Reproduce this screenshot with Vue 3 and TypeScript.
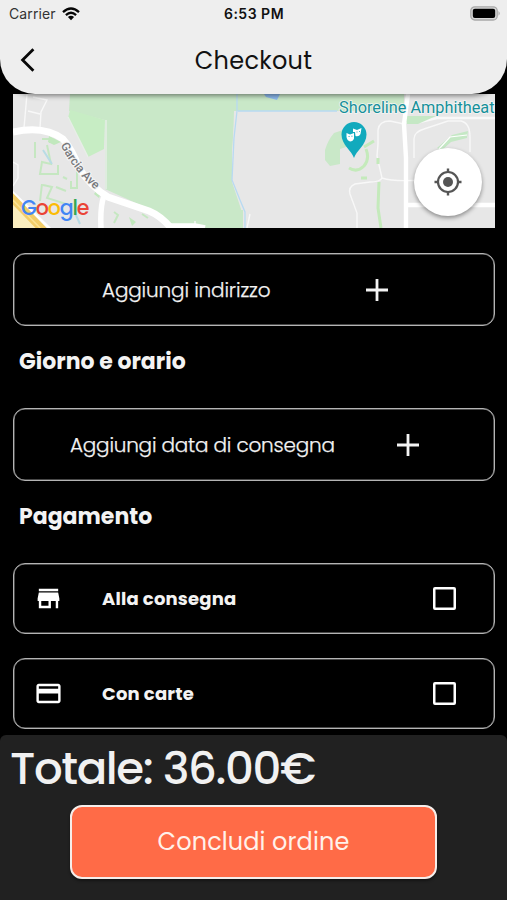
<script setup lang="ts">
import { ref } from 'vue'

interface AddRow {
  id: string
  label: string
}
interface Payment {
  id: string
  label: string
  icon: string
}

const address: AddRow = { id: 'address', label: 'Aggiungi indirizzo' }
const delivery: AddRow = { id: 'delivery', label: 'Aggiungi data di consegna' }

const payments: Payment[] = [
  {
    id: 'cash',
    label: 'Alla consegna',
    icon: 'M20 4H4v2h16V4zm1 10v-2l-1-5H4l-1 5v2h1v6h10v-6h4v6h2v-6h1zm-9 4H6v-4h6v4z',
  },
  {
    id: 'card',
    label: 'Con carte',
    icon: 'M20 4H4c-1.11 0-1.99.89-1.99 2L2 18c0 1.11.89 2 2 2h16c1.11 0 2-.89 2-2V6c0-1.11-.89-2-2-2zm0 14H4v-6h16v6zm0-10H4V6h16v2z',
  },
]
const selected = ref<string | null>(null)
const toggle = (id: string) => {
  selected.value = selected.value === id ? null : id
}
</script>

<template>
  <div class="screen">
    <header class="header">
      <div class="status">
        <div class="carrier">
          <span class="carrier-name">Carrier</span>
          <svg class="wifi" viewBox="0 0 18 14">
            <path d="M1 5.2Q9-2.2 17 5.2M3.9 8.1Q9 3.5 14.1 8.1" fill="none" stroke="#050505" stroke-width="2.3" />
            <path d="M5.9 10Q9 7.4 12.1 10L9 13.2z" fill="#050505" />
          </svg>
        </div>
        <span class="time">6:53 PM</span>
        <svg class="battery" viewBox="0 0 31 15">
          <rect x=".8" y=".8" width="26.4" height="13.2" rx="4" fill="#d8d8d8" stroke="#a9a9a9" stroke-width="1.3" />
          <rect x="2.8" y="2.8" width="22.4" height="9.2" rx="2" fill="#000" />
          <path d="M28.5 5Q31 7.4 28.5 9.8z" fill="#a9a9a9" />
        </svg>
      </div>
      <div class="nav">
        <svg class="back" viewBox="0 0 16 24">
          <path d="M13.4 1.2L2.6 12l10.8 10.8" fill="none" stroke="#080808" stroke-width="2.8" />
        </svg>
        <h1 class="title">Checkout</h1>
      </div>
    </header>

    <main class="content">
      <div class="map">
        <svg class="map-art" viewBox="13 94 482 134">
          <rect x="13" y="94" width="482" height="134" fill="#e7e7e7" />
          <path d="M70 94H404V110L400 112H235L232 150V182L242 212V228H172L158 213L105 189V120L69 111z" fill="#c9e8c8" />
          <path d="M70 110L105 120L104 149L88 157L68 118z" fill="#c7edc4" />
          <path d="M234 111H404V228H243L241 205L233 184V146z" fill="#e7e7e7" />
          <path d="M237 94V111L234 138L232 180L240 200L245 212V228M238 111H337" fill="none" stroke="#b8daf2" stroke-width="1.3" />
          <path d="M264 94H280L277 100L266 97z" fill="#8ebcf0" />
          <path d="M232 210H243V228H232z" fill="#c9e8c8" />
          <g fill="none" stroke="#f8f8f8" stroke-width="1.4">
            <path d="M27 94L24 128M28 111L40 114M33 97L47 100L41 112L40 128M13 162L18 165V178L13 186M195 221V228M250 214L247 228" />
            <path d="M68 117L88 157M106 120V189" stroke="#e9eee9" />
            <path d="M378 144V130Q379 121 390 121L404 124M378 144L377 156L382 178M382 178Q394 182 421 180M382 178Q380 182 370 182L355 184Q348 187 350 194L357 213V228M414 158V139Q414 132 424 129L448 121H461Q470 123 470 137V152" />
            <path d="M404 122H420L437 118H495" stroke-width="2.4" />
          </g>
          <path d="M42 139H50V143M35 142V158M47 145L51 164L42 162L40 174H58V165M42 184L40 201M43 185L52 187L47 198L66 204M63 177L67 179M71 181V188H77V171M114 212L118 215L114 223M142 214L148 218M56 187L66 191" fill="none" stroke="#bde7b8" stroke-width="2" opacity=".8" />
          <path d="M43 150L52 164M75 213L80 224" stroke="#b8dce5" stroke-width="2" />
          <path d="M49 136L61 142L54 145L48 142zM96 191L101 192L99 198L94 194zM129 217L136 222L132 226z" fill="#c1e8bd" />
          <path d="M334 133Q328 140 325 150V160L330 166L340 164V149L352 145V132L343 130z" fill="#c9e8c8" />
          <path d="M364 147L374 141M366 149Q370 159 364 166Q357 173 349 168M361 178H367M379 182L378 208L381 228M378 158V164" fill="none" stroke="#c4eabb" stroke-width="3" />
          <path d="M404 116H436L418 124H407zM437 148L452 135L468 131L467 138L451 142L442 150z" fill="#c5e8c5" />
          <path d="M439 149L450 137L467 135" fill="none" stroke="#fff" stroke-width="1.2" />
          <path d="M13 132Q44 125 63 139Q72 149 79 168Q91 187 108 197L149 211Q161 216 171 228" fill="none" stroke="#fff" stroke-width="7" />
          <path d="M104 196Q100 206 101 228M170 226H195L205 228" fill="none" stroke="#fff" stroke-width="5.5" />
          <path d="M408 94L404 124L406 158V228M405 205H495" fill="none" stroke="#fff" stroke-width="4.4" />
          <path d="M13 199L43 228H13z" fill="#fbeebf" />
          <path d="M11 191L51 230" stroke="#fff" stroke-width="3" />
          <path d="M10 196L44 231" stroke="#f2cd68" stroke-width="8" />
          <path d="M10 197L43 231" stroke="#fbe294" stroke-width="1.5" />
          <defs>
            <path id="garcia-path" d="M60.500 145Q73 171 100 194" />
          </defs>
          <text class="road" textLength="57">
            <textPath href="#garcia-path">Garcia Ave</textPath>
          </text>
          <text class="place" x="339" y="113" textLength="155.500" lengthAdjust="spacingAndGlyphs">Shoreline Amphitheat</text>
          <path d="M354 158C352 151 341.500 145 341.500 134.500A12.500 12.500 0 0 1 366.500 134.500C366.500 145 356 151 354 158z" fill="#12aabd" />
          <path d="M346.500 133L350 134.500L354 133V138.500Q353 141.500 350 141.500Q347 140.500 346.500 137z" fill="#fff" />
          <path d="M353 128.500L357 130L361.500 128L360.500 134Q359 137 355.500 136L355 132L353 132z" fill="#fff" />
          <path d="M348.500 136.500H349.700M351.300 136.200H352.500M356.500 132H357.500M359 131.500H360" stroke="#12aabd" stroke-width=".8" />
          <text class="google" x="21" y="214.500"><tspan fill="#4285f4">G</tspan><tspan fill="#ea4335">o</tspan><tspan fill="#fbbc05">o</tspan><tspan fill="#4285f4">g</tspan><tspan fill="#34a853">l</tspan><tspan fill="#ea4335">e</tspan></text>
        </svg>
        <button class="locate">
          <svg class="locate-icon" viewBox="0 0 28 28">
            <circle cx="14" cy="14" r="10" fill="none" stroke="#555" stroke-width="2.2" />
            <circle cx="14" cy="14" r="5" fill="#555" />
            <path d="M14 .5V5M14 23v4.500M.5 14H5M23 14h4.500" stroke="#555" stroke-width="2.400" />
          </svg>
        </button>
      </div>

      <button class="box add add-address">
        <span class="add-label">{{ address.label }}</span>
        <svg class="plus" viewBox="0 0 22 22"><path d="M11 0v22M0 11h22" stroke="#f3f3f3" stroke-width="2.800" /></svg>
      </button>

      <h2 class="heading">Giorno e orario</h2>

      <button class="box add add-delivery">
        <span class="add-label">{{ delivery.label }}</span>
        <svg class="plus" viewBox="0 0 22 22"><path d="M11 0v22M0 11h22" stroke="#f3f3f3" stroke-width="2.800" /></svg>
      </button>

      <h2 class="heading">Pagamento</h2>

      <div class="payments">
        <button v-for="p in payments" :key="p.id" class="box pay" @click="toggle(p.id)">
          <svg class="pay-icon" viewBox="0 0 24 24"><path :d="p.icon" fill="#fff" /></svg>
          <span class="pay-label">{{ p.label }}</span>
          <span class="check" :class="{ checked: selected === p.id }"></span>
        </button>
      </div>
    </main>

    <footer class="footer">
      <div class="total">Totale: 36.00€</div>
      <button class="submit">Concludi ordine</button>
    </footer>
  </div>
</template>

<style>
body {
  background: #000;
}
</style>

<style scoped>
.screen {
  width: 507px;
  height: 900px;
  display: flex;
  flex-direction: column;
  overflow: hidden;
  background: #000;
  color: #f3f3f3;
  font-family: Poppins, Inter, sans-serif;
}
.screen * {
  box-sizing: border-box;
}
button {
  margin: 0;
  padding: 0;
  font-family: inherit;
  color: inherit;
  background: none;
  border: 0;
}
svg {
  display: block;
  flex: none;
}
.header {
  position: relative;
  z-index: 1;
  flex: none;
  height: 94px;
  background: #eee;
  border-radius: 0 0 35px 35px;
  box-shadow: 0 2px 5px rgba(0, 0, 0, 0.45);
  color: #111;
}
.status {
  display: grid;
  grid-template-columns: 1fr auto 1fr;
  align-items: center;
  height: 27px;
  padding: 0 6px 0 9px;
}
.carrier {
  display: flex;
  align-items: center;
  gap: 6px;
}
.carrier-name {
  font-family: Inter, sans-serif;
  font-size: 14px;
  color: #333;
  letter-spacing: 0.1px;
}
.wifi {
  width: 18px;
  height: 14px;
}
.time {
  margin-right: 2px;
  font-family: Inter, sans-serif;
  font-size: 14px;
  font-weight: 600;
  letter-spacing: 0.5px;
}
.battery {
  width: 31px;
  height: 15px;
  justify-self: end;
}
.nav {
  display: grid;
  grid-template-columns: 60px 1fr 60px;
  align-items: center;
  height: 66px;
}
.back {
  width: 16px;
  height: 24px;
  margin-left: 20px;
}
.title {
  margin: 0;
  text-align: center;
  font-size: 24px;
  font-weight: 400;
  letter-spacing: 0.3px;
}
.content {
  flex: none;
  height: 641px;
  padding: 0 12.500px 0 13px;
}
.map {
  position: relative;
  height: 134px;
  overflow: hidden;
}
.map-art {
  width: 482px;
  height: 134px;
}
.road {
  font: 500 12px Roboto, sans-serif;
  fill: #77797c;
  stroke: #f4f4f4;
  stroke-width: 2px;
  paint-order: stroke;
}
.place {
  font: 400 16px Roboto, sans-serif;
  fill: #16909a;
  stroke: #f5f5f5;
  stroke-width: 1.500px;
  paint-order: stroke;
}
.google {
  font: 500 20.500px Poppins, Inter, sans-serif;
  letter-spacing: -1.100px;
}
.locate {
  position: absolute;
  right: 12.500px;
  bottom: 12px;
  width: 68px;
  height: 68px;
  display: grid;
  place-items: center;
  background: #fff;
  border-radius: 50%;
  box-shadow: 0 2px 4px rgba(0, 0, 0, 0.4);
}
.locate-icon {
  width: 28px;
  height: 28px;
}
.box {
  display: flex;
  align-items: center;
  width: 100%;
  border: 1px solid #b4b4b4;
  box-shadow: inset 0 0 0 0.500px rgba(180, 180, 180, 0.8);
  border-radius: 12px;
}
.add {
  height: 73px;
}
.add-address {
  margin-top: 25px;
  padding-left: 88px;
}
.add-delivery {
  padding-left: 56px;
}
.add-label {
  flex: none;
  width: 263.500px;
  text-align: left;
  white-space: nowrap;
  font-size: 20px;
  font-weight: 300;
  letter-spacing: -0.15px;
  -webkit-text-stroke: 0.250px currentColor;
}
.add-delivery .add-label {
  width: 327px;
  letter-spacing: -0.220px;
}
.plus {
  width: 22px;
  height: 22px;
}
.heading {
  margin: 21px 0 31px 6px;
  font-size: 22px;
  font-weight: 700;
  line-height: 30px;
}
.payments {
  display: flex;
  flex-direction: column;
  gap: 24px;
}
.pay {
  height: 71px;
  padding: 0 38px 0 20px;
}
.pay-icon {
  width: 29px;
  height: 29px;
}
.pay-label {
  flex: 1;
  margin-left: 39px;
  text-align: left;
  font-size: 18px;
  font-weight: 700;
  letter-spacing: 0.180px;
}
.check {
  width: 23px;
  height: 23px;
  border: 2px solid #fff;
  box-shadow: inset 0 0 0 0.500px #fff;
  border-radius: 2px;
}
.check.checked {
  background: #ff6b47;
}
.footer {
  flex: none;
  height: 165px;
  display: flex;
  flex-direction: column;
  background: #212121;
  border-radius: 6px 6px 0 0;
}
.total {
  height: 70px;
  padding-left: 10px;
  white-space: nowrap;
  font-size: 45px;
  line-height: 67px;
  font-weight: 500;
  letter-spacing: -1.380px;
  color: #f1f1f1;
}
.submit {
  align-self: center;
  width: 367px;
  height: 74px;
  padding-bottom: 2px;
  border: 2px solid #f5eeeb;
  border-radius: 12px;
  background: #ff6b47;
  box-shadow: 0 2px 3px rgba(0, 0, 0, 0.4);
  font-size: 24px;
  font-weight: 400;
  letter-spacing: 0.100px;
  color: #fff1ea;
}
</style>
